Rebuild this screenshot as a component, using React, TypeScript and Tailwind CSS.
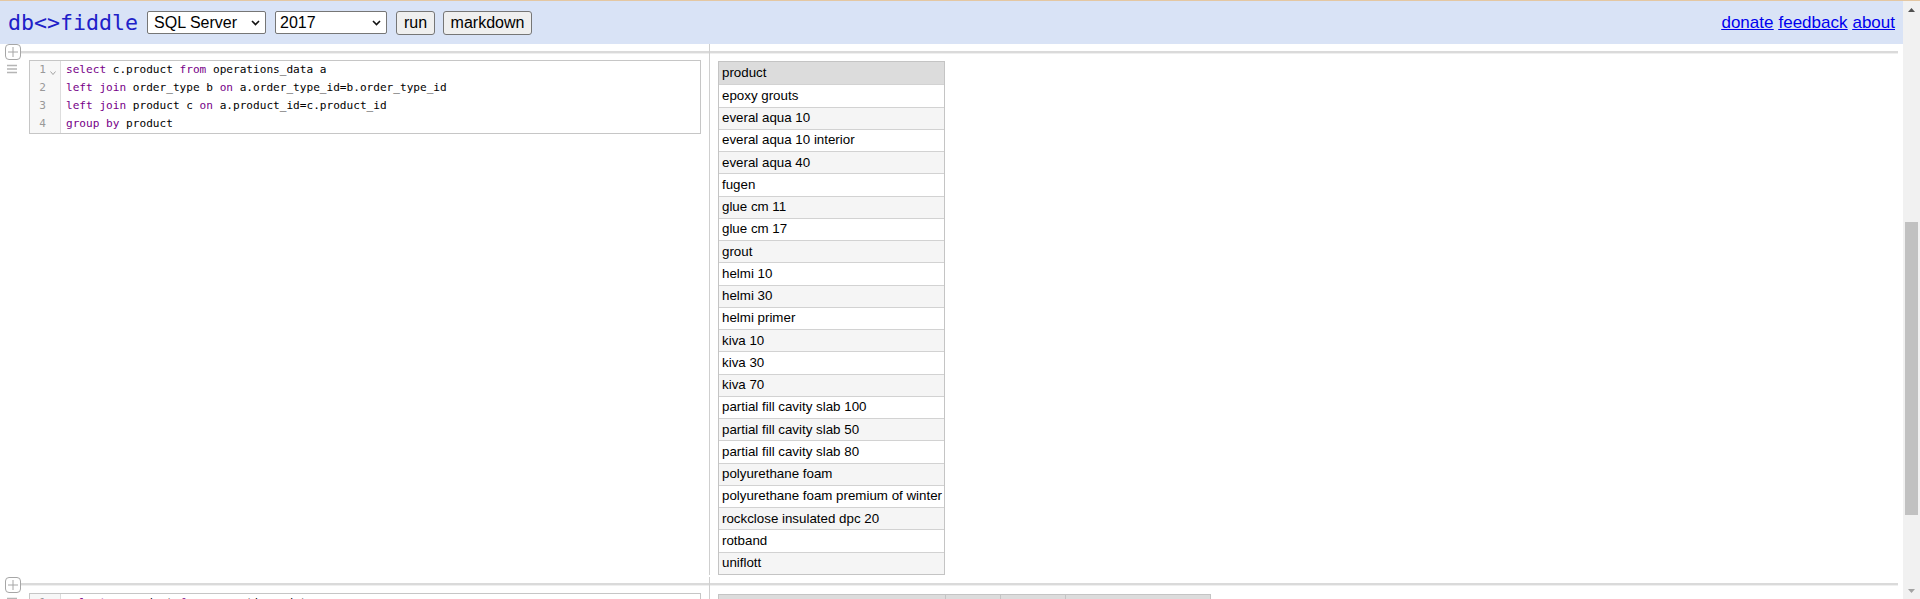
import React from "react";

type Tok = [string, boolean?];

const query1: Tok[][] = [
  [["select", true], [" c.product "], ["from", true], [" operations_data a"]],
  [["left join", true], [" order_type b "], ["on", true], [" a.order_type_id=b.order_type_id"]],
  [["left join", true], [" product c "], ["on", true], [" a.product_id=c.product_id"]],
  [["group by", true], [" product"]],
];

const query2: Tok[][] = [
  [["select", true], [" c.product "], ["from", true], [" operations_data a"]],
  [["left join", true], [" product c "], ["on", true], [" a.product_id=c.product_id"]],
];

const products = [
  "epoxy grouts",
  "everal aqua 10",
  "everal aqua 10 interior",
  "everal aqua 40",
  "fugen",
  "glue cm 11",
  "glue cm 17",
  "grout",
  "helmi 10",
  "helmi 30",
  "helmi primer",
  "kiva 10",
  "kiva 30",
  "kiva 70",
  "partial fill cavity slab 100",
  "partial fill cavity slab 50",
  "partial fill cavity slab 80",
  "polyurethane foam",
  "polyurethane foam premium of winter",
  "rockclose insulated dpc 20",
  "rotband",
  "uniflott",
];

function PlusBox() {
  return (
    <svg width="16" height="16" viewBox="0 0 16 16" className="shrink-0">
      <rect x="0.5" y="0.5" width="15" height="15" rx="3.5" fill="white" stroke="#a6a6a6" />
      <path d="M8 3v10M3 8h10" stroke="#a6a6a6" strokeWidth="1" />
    </svg>
  );
}

function Hamburger() {
  return (
    <svg width="10" height="10" viewBox="0 0 10 10" className="shrink-0 mt-[4px]">
      <path d="M0 1.5h10M0 5h10M0 8.5h10" stroke="#b5b5b5" strokeWidth="1.4" />
    </svg>
  );
}

function Chevron() {
  return (
    <svg width="9" height="6" viewBox="0 0 9 6" className="shrink-0">
      <path d="M1 1l3.5 3.5L8 1" stroke="#111" strokeWidth="1.6" fill="none" />
    </svg>
  );
}

function Rule() {
  return <div className="flex-1 h-[3px] border-t-2 border-[#dadada] bg-[#efefef]" />;
}

function Editor({ lines }: { lines: Tok[][] }) {
  return (
    <div className="w-[672px] ml-[12px] border border-[#c6c6c6] flex bg-white font-['DejaVu_Sans_Mono',monospace] text-[11.1px] leading-[18px]">
      <div className="w-[31px] shrink-0 bg-[#f7f7f7] border-r border-[#dddddd] flex flex-col text-[#999]">
        {lines.map((_, i) => (
          <div key={i} className="h-[18px] flex items-center">
            <span className="w-[16px] text-right">{i + 1}</span>
            <span className="w-[14px] flex justify-center pt-[5px]">
              {i === 0 && (
                <svg width="6" height="4" viewBox="0 0 6 4">
                  <path d="M0.5 0.5l2.5 3 2.5-3" stroke="#999" strokeWidth="0.9" fill="none" />
                </svg>
              )}
            </span>
          </div>
        ))}
      </div>
      <div className="pl-[5px] flex flex-col whitespace-pre text-black">
        {lines.map((line, i) => (
          <div key={i} className="h-[18px]">
            {line.map(([t, kw], j) => (
              <span key={j} className={kw ? "text-[#770088]" : ""}>
                {t}
              </span>
            ))}
          </div>
        ))}
      </div>
    </div>
  );
}

function ProductTable() {
  return (
    <div className="w-[227px] border border-[#c4c4c4] flex flex-col text-[13.33px] text-black">
      <div className="h-[22.26px] shrink-0 flex items-center px-[3px] bg-[#dcdcdc]">product</div>
      {products.map((p, i) => (
        <div
          key={p}
          className={
            "h-[22.26px] shrink-0 flex items-center px-[3px] border-t border-[#d2d2d2] whitespace-nowrap " +
            (i % 2 === 0 ? "bg-white" : "bg-[#f5f5f5]")
          }
        >
          {p}
        </div>
      ))}
    </div>
  );
}

function SecondTable() {
  return (
    <div className="flex border border-[#c4c4c4] bg-[#dcdcdc] h-[23px] text-[13.33px]">
      <div className="w-[227px] border-r border-[#c4c4c4]" />
      <div className="w-[55px] border-r border-[#c4c4c4]" />
      <div className="w-[65px] border-r border-[#c4c4c4]" />
      <div className="w-[144px]" />
    </div>
  );
}

function Section({ lines, children }: { lines: Tok[][]; children: React.ReactNode }) {
  return (
    <div className="flex shrink-0 pb-[2px]">
      <div className="w-[709px] shrink-0 flex flex-col">
        <div className="h-[16px] flex items-center pl-[5px]">
          <PlusBox />
          <Rule />
        </div>
        <div className="flex pl-[7px]">
          <Hamburger />
          <Editor lines={lines} />
        </div>
      </div>
      <div className="flex-1 border-l border-[#cfcfcf] flex flex-col">
        <div className="h-[16px] flex items-center pr-[5px]">
          <Rule />
        </div>
        <div className="pl-[8px] pt-px flex">{children}</div>
      </div>
    </div>
  );
}

function Scrollbar() {
  return (
    <div className="w-[17px] shrink-0 bg-[#f1f1f1] flex flex-col items-center">
      <div className="h-[17px] flex items-center justify-center">
        <svg width="7" height="4" viewBox="0 0 7 4">
          <path d="M0 4L3.5 0L7 4Z" fill="#505050" />
        </svg>
      </div>
      <div className="h-[204px]" />
      <div className="w-[13px] h-[293px] bg-[#c1c1c1]" />
      <div className="flex-1" />
      <div className="h-[17px] flex items-center justify-center">
        <svg width="7" height="4" viewBox="0 0 7 4">
          <path d="M0 0L3.5 4L7 0Z" fill="#a3a3a3" />
        </svg>
      </div>
    </div>
  );
}

export default function App() {
  return (
    <div className="w-[1920px] h-[599px] overflow-hidden flex flex-col bg-white font-['Liberation_Sans',Arial,sans-serif]">
      <div className="h-px bg-[#e4c7a2] shrink-0" />
      <div className="flex flex-1 min-h-0">
        <div className="flex-1 min-w-0 flex flex-col overflow-hidden">
          {/* top bar */}
          <header className="h-[43px] shrink-0 bg-[#d9e3f6] flex items-center pl-[8px] pr-[8px] text-[16px]">
            <span className="font-['DejaVu_Sans_Mono',monospace] text-[21.6px] text-[#2020c8] leading-none">
              db&lt;&gt;fiddle
            </span>
            <div className="ml-[9px] w-[119px] h-[23px] bg-white border border-[#767676] rounded-[2px] flex items-center justify-between pl-[6px] pr-[5px]">
              <span>SQL Server</span>
              <Chevron />
            </div>
            <div className="ml-[9px] w-[112px] h-[23px] bg-white border border-[#767676] rounded-[2px] flex items-center justify-between pl-[4px] pr-[5px]">
              <span>2017</span>
              <Chevron />
            </div>
            <button className="ml-[9px] w-[39px] h-[24px] bg-[#efefef] border border-[#767676] rounded-[3px] flex items-center justify-center">
              run
            </button>
            <button className="ml-[8px] w-[89px] h-[24px] bg-[#efefef] border border-[#767676] rounded-[3px] flex items-center justify-center">
              markdown
            </button>
            <nav className="ml-auto flex gap-[5px] text-[17px] text-[#0000ee] underline">
              <a href="#">donate</a>
              <a href="#">feedback</a>
              <a href="#">about</a>
            </nav>
          </header>

          <Section lines={query1}>
            <ProductTable />
          </Section>
          <Section lines={query2}>
            <SecondTable />
          </Section>
        </div>
        <Scrollbar />
      </div>
    </div>
  );
}
